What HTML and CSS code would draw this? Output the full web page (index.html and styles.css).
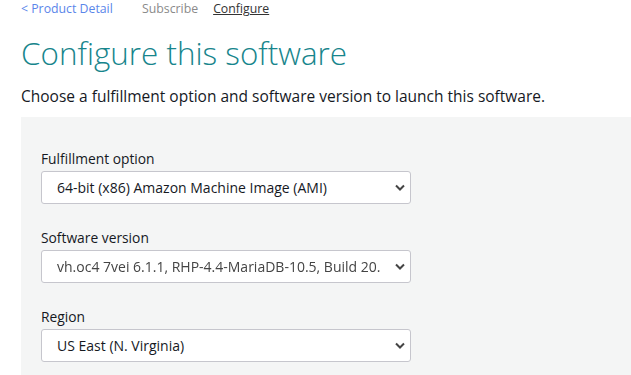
FILE: index.html
```html
<!doctype html>
<html>

<head>
  <title>Configure this software</title>
  <meta http-equiv="Content-Type" content="text/html; charset=UTF-8">
  <link rel="stylesheet" href="styles.css">
</head>

<body>
  <nav class="crumbs">
    <a href="#" class="back">&lt; Product Detail</a>
    <a href="#" class="step">Subscribe</a>
    <a href="#" class="step current">Configure</a>
  </nav>
  <h1>Configure this software</h1>
  <p class="lead">Choose a fulfillment option and software version to launch this software.</p>
  <div class="panel">
    <div class="field">
      <label>Fulfillment option</label>
      <div class="select">
        <span>64-bit (x86) Amazon Machine Image (AMI)</span>
        <svg width="10" height="7" viewBox="0 0 10 7"><path d="M1 1.5l4 4 4-4" fill="none" stroke="#444" stroke-width="2"/></svg>
      </div>
    </div>
    <div class="field">
      <label>Software version</label>
      <div class="select">
        <span class="blurred">vh.oc4 7vei 6.1.1, RHP-4.4-MariaDB-10.5, Build 20.</span>
        <svg width="10" height="7" viewBox="0 0 10 7"><path d="M1 1.5l4 4 4-4" fill="none" stroke="#444" stroke-width="2"/></svg>
      </div>
    </div>
    <div class="field">
      <label>Region</label>
      <div class="select">
        <span>US East (N. Virginia)</span>
        <svg width="10" height="7" viewBox="0 0 10 7"><path d="M1 1.5l4 4 4-4" fill="none" stroke="#444" stroke-width="2"/></svg>
      </div>
    </div>
  </div>
</body>

</html>
```

FILE: styles.css
```css
html,
body {
  margin: 0;
  background-color: white;
  font-family: 'Open Sans', sans-serif;
  color: #16191f;
}

body {
  padding: 0 0 0 21px;
  overflow: hidden;
}

.crumbs {
  display: flex;
  height: 18px;
  font-size: 12.3px;
  line-height: 18px;
}

.crumbs a {
  text-decoration: none;
}

.back {
  color: #5a86ea;
  width: 121px;
}

.step {
  color: #8a8a8a;
  margin-right: 15px;
}

.step.current {
  color: #333;
  text-decoration: underline;
}

h1 {
  margin: 13px 0 0;
  font-size: 31.4px;
  font-weight: 300;
  line-height: 44px;
  color: #17858c;
}

.lead {
  margin: 9px 0 0;
  font-size: 15.5px;
  line-height: 24px;
}

.panel {
  margin-top: 9px;
  background-color: #f4f5f5;
  padding: 32px 20px 14px;
  display: flex;
  flex-direction: column;
  gap: 24px;
}

.field label {
  display: block;
  font-size: 13.8px;
  line-height: 20px;
  margin-bottom: 2px;
}

.select {
  width: 370px;
  height: 33px;
  box-sizing: border-box;
  background-color: white;
  border: 1px solid #c6c6cd;
  border-radius: 3px;
  display: flex;
  align-items: center;
  justify-content: space-between;
  padding: 0 5px 0 15px;
  font-size: 14px;
}

.blurred {
  filter: blur(0.6px);
  color: #444;
}
```
